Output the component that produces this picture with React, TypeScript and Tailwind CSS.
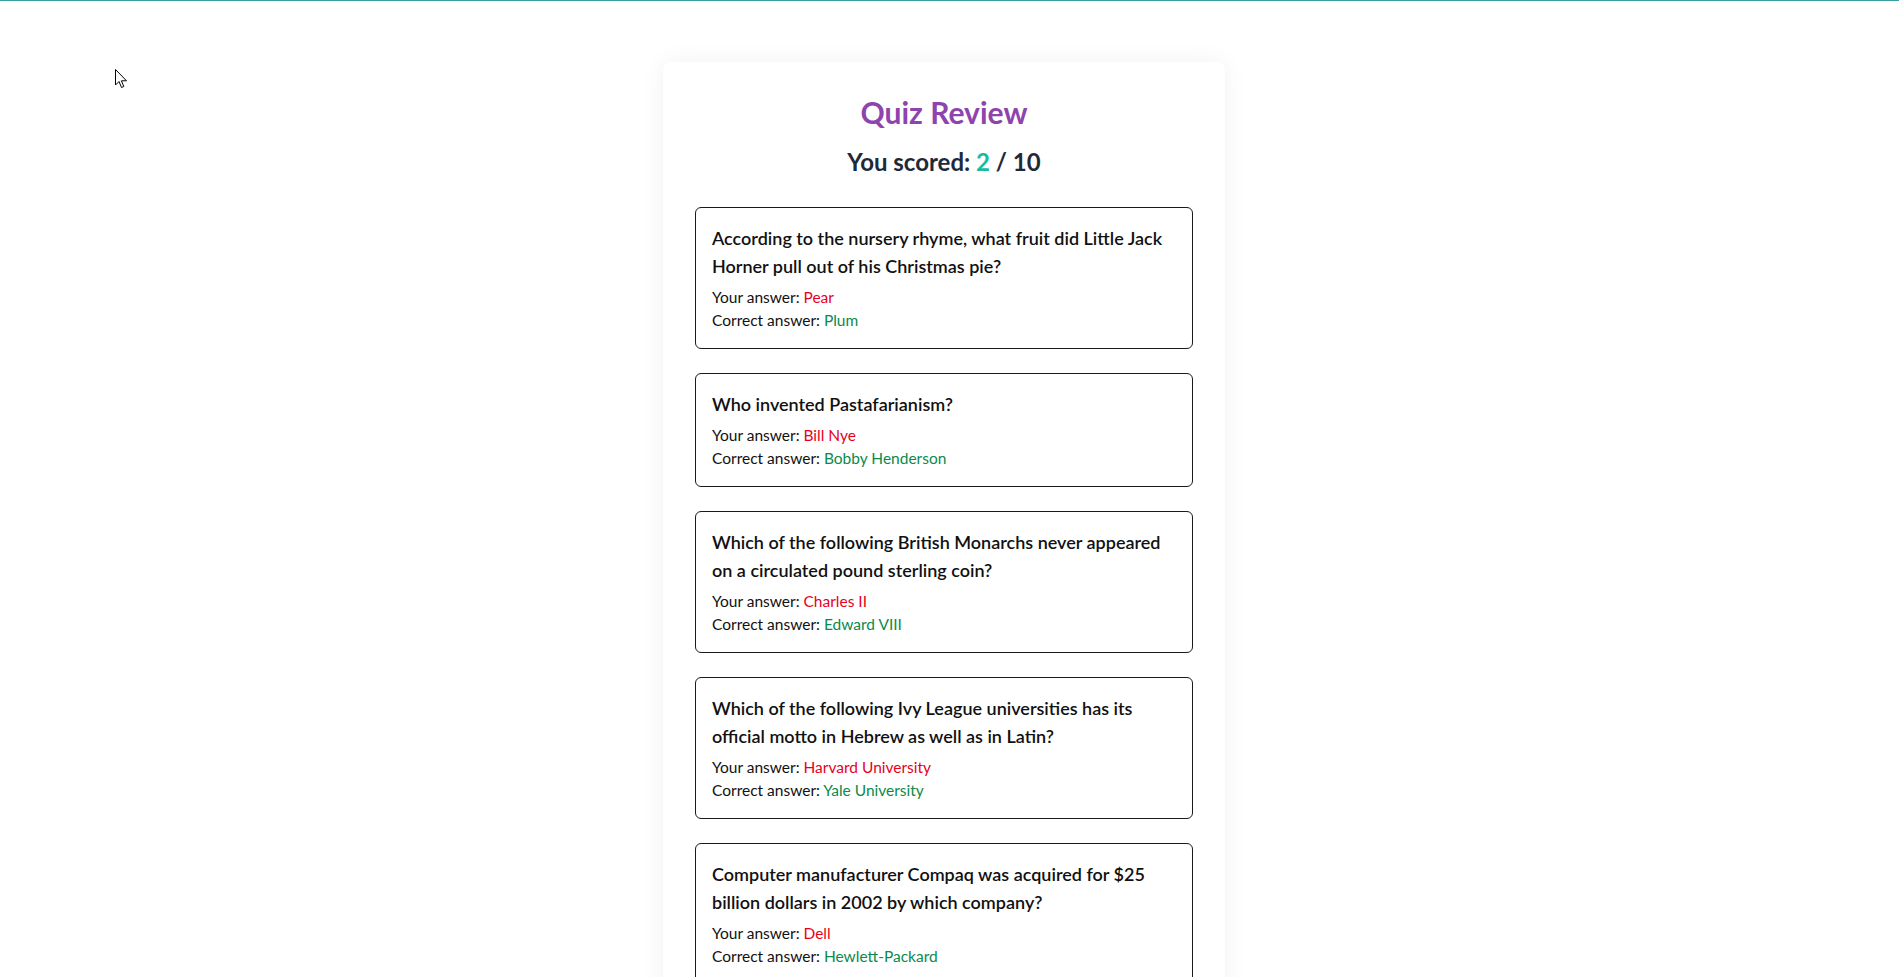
import React from "react";

type ReviewItem = {
  question: string;
  yourAnswer: string;
  correctAnswer: string;
};

const items: ReviewItem[] = [
  {
    question:
      "According to the nursery rhyme, what fruit did Little Jack Horner pull out of his Christmas pie?",
    yourAnswer: "Pear",
    correctAnswer: "Plum",
  },
  {
    question: "Who invented Pastafarianism?",
    yourAnswer: "Bill Nye",
    correctAnswer: "Bobby Henderson",
  },
  {
    question:
      "Which of the following British Monarchs never appeared on a circulated pound sterling coin?",
    yourAnswer: "Charles II",
    correctAnswer: "Edward VIII",
  },
  {
    question:
      "Which of the following Ivy League universities has its official motto in Hebrew as well as in Latin?",
    yourAnswer: "Harvard University",
    correctAnswer: "Yale University",
  },
  {
    question:
      "Computer manufacturer Compaq was acquired for $25 billion dollars in 2002 by which company?",
    yourAnswer: "Dell",
    correctAnswer: "Hewlett-Packard",
  },
];

function ReviewCard({ item }: { item: ReviewItem }) {
  return (
    <div className="mb-6 rounded-md border border-[#1a1a1a] p-4">
      <p className="mb-[6px] text-lg leading-7 font-semibold text-[#111]">
        {item.question}
      </p>
      <p className="text-[15.5px] leading-[23px] text-[#111]">
        Your answer: <span className="text-[#e8001c]">{item.yourAnswer}</span>
      </p>
      <p className="text-[15.5px] leading-[23px] text-[#111]">
        Correct answer:{" "}
        <span className="text-[#0a8a4c]">{item.correctAnswer}</span>
      </p>
    </div>
  );
}

export default function App() {
  return (
    <div
      className="min-h-screen border-t border-[#3a9ca3] bg-white pr-[11px]"
      style={{ fontFamily: "Lato, 'Open Sans', sans-serif" }}
    >
      {/* mouse pointer captured in the screenshot */}
      <svg
        className="absolute left-[115px] top-[69px]"
        width="13"
        height="21"
        viewBox="0 0 13 21"
      >
        <path
          d="M0.5 0.5 L0.5 16 L4 12.5 L6.5 18.5 L8.8 17.5 L6.4 11.8 L11.5 11.8 Z"
          fill="#fff"
          stroke="#000"
          strokeWidth="1"
          strokeLinejoin="round"
        />
      </svg>

      <div className="mx-auto mt-[61px] w-[562px] rounded-lg bg-white p-8 shadow-[0_0_24px_rgba(0,0,0,0.06)]">
        <h1 className="mb-4 text-center text-3xl font-bold text-[#8e44ad]">
          Quiz Review
        </h1>
        <h2 className="mb-[29px] text-center text-2xl font-bold text-[#1e2a3a]">
          You scored: <span className="text-[#1abc9c]">2</span> / 10
        </h2>

        {items.map((item, i) => (
          <ReviewCard key={i} item={item} />
        ))}
      </div>
    </div>
  );
}
